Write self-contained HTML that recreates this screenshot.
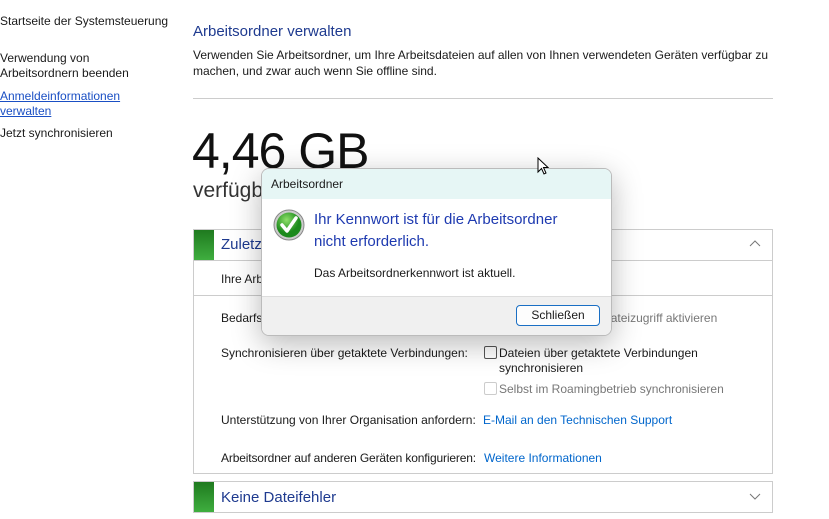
<!DOCTYPE html>
<html><head><meta charset="utf-8"><style>
body{margin:0;width:829px;height:519px;background:#fff;font-family:"Liberation Sans",sans-serif;font-size:12px;color:#1a1a1a;position:relative;overflow:hidden}
.a{position:absolute;white-space:nowrap}
.lnk{color:#0066cc}
.blue{color:#1d3d9c}
.cb{position:absolute;width:11px;height:11px;border:1px solid #555;border-radius:2px;background:#fff}
</style></head><body>
<div class="a" style="left:0;top:14px">Startseite der Systemsteuerung</div>
<div class="a" style="left:0;top:51px;line-height:15px">Verwendung von<br>Arbeitsordnern beenden</div>
<div class="a lnk" style="left:0;top:89px;line-height:15px;text-decoration:underline;color:#1a4fc4">Anmeldeinformationen<br>verwalten</div>
<div class="a" style="left:0;top:126px">Jetzt synchronisieren</div>

<div class="a blue" style="left:193px;top:23px;font-size:15px;color:#1e3a8f">Arbeitsordner verwalten</div>
<div class="a" style="left:193px;top:47px;line-height:16px">Verwenden Sie Arbeitsordner, um Ihre Arbeitsdateien auf allen von Ihnen verwendeten Geräten verfügbar zu<br>machen, und zwar auch wenn Sie offline sind.</div>
<div class="a" style="left:193px;top:98px;width:580px;height:1px;background:#ccc"></div>
<div class="a" style="left:192px;top:122px;font-size:50px;line-height:58px;color:#111;letter-spacing:-1px">4,46 GB</div>
<div class="a" style="left:193px;top:179px;font-size:21px;color:#333">verfügbar</div>

<div class="a" style="left:193px;top:229px;width:578px;height:243px;border:1px solid #ccc"></div>
<div class="a" style="left:194px;top:230px;width:20px;height:30px;background:linear-gradient(#1f7a1f,#3fae3f)"></div>
<div class="a" style="left:221px;top:236px;font-size:15px;color:#1e3a8f">Zuletzt synchronisiert</div>
<svg class="a" style="left:749px;top:239px" width="12" height="8"><path d="M1 7L6 2L11 7" fill="none" stroke="#777" stroke-width="1"/></svg>
<div class="a" style="left:194px;top:260px;width:578px;height:1px;background:#ccc"></div>
<div class="a" style="left:221px;top:272px">Ihre Arbeitsordner</div>
<div class="a" style="left:194px;top:295px;width:578px;height:1px;background:#ccc"></div>
<div class="a" style="left:221px;top:311px">Bedarfsgesteuerter Dateizugriff:</div>
<div class="a" style="left:494px;top:311px;color:#777">Bedarfsgesteuerten Dateizugriff aktivieren</div>
<div class="a" style="left:221px;top:346px">Synchronisieren über getaktete Verbindungen:</div>
<div class="cb" style="left:484px;top:346px"></div>
<div class="a" style="left:499px;top:346px;line-height:15px">Dateien über getaktete Verbindungen<br>synchronisieren</div>
<div class="cb" style="left:484px;top:382px;border-color:#ccc"></div>
<div class="a" style="left:499px;top:382px;color:#777">Selbst im Roamingbetrieb synchronisieren</div>
<div class="a" style="left:221px;top:413px">Unterstützung von Ihrer Organisation anfordern:</div>
<div class="a lnk" style="left:483px;top:413px">E-Mail an den Technischen Support</div>
<div class="a" style="left:221px;top:451px;letter-spacing:-0.15px">Arbeitsordner auf anderen Geräten konfigurieren:</div>
<div class="a lnk" style="left:484px;top:451px">Weitere Informationen</div>

<div class="a" style="left:193px;top:481px;width:578px;height:30px;border:1px solid #ccc"></div>
<div class="a" style="left:194px;top:482px;width:20px;height:30px;background:linear-gradient(#1f7a1f,#3fae3f)"></div>
<div class="a" style="left:221px;top:489px;font-size:15px;color:#1e3a8f">Keine Dateifehler</div>
<svg class="a" style="left:749px;top:493px" width="12" height="8"><path d="M1 1L6 6L11 1" fill="none" stroke="#777" stroke-width="1"/></svg>

<div class="a" style="left:261px;top:168px;width:349px;height:166px;border:1px solid #bbb;border-radius:8px;overflow:hidden;background:#fff;box-shadow:0 8px 30px rgba(0,0,0,.28)">
 <div style="height:30px;background:#e6f6f5;padding-left:9px;line-height:30px;font-size:12px">Arbeitsordner</div>
 <svg style="position:absolute;left:11px;top:40px" width="32" height="32"><defs><radialGradient id="g" cx="40%" cy="30%"><stop offset="0" stop-color="#8ee06a"/><stop offset="1" stop-color="#1c8a1c"/></radialGradient></defs><circle cx="16" cy="16" r="15" fill="#ccc" stroke="#888"/><circle cx="16" cy="16" r="12.5" fill="url(#g)"/><path d="M9 16l5 6 9-13" fill="none" stroke="#fff" stroke-width="3.5" stroke-linecap="round" stroke-linejoin="round"/></svg>
 <div class="a" style="left:52px;top:40px;font-size:15px;line-height:22px;color:#1e3ab0">Ihr Kennwort ist für die Arbeitsordner<br>nicht erforderlich.</div>
 <div class="a" style="left:52px;top:97px">Das Arbeitsordnerkennwort ist aktuell.</div>
 <div style="position:absolute;left:0;top:127px;width:100%;height:40px;background:#f0f0f0;border-top:1px solid #ddd"></div>
 <div class="a" style="left:254px;top:136px;width:82px;height:19px;border:1px solid #1a6fc4;border-radius:4px;background:#fdfdfd;text-align:center;line-height:19px">Schließen</div>
</div>
<svg class="a" style="left:537px;top:157px" width="14" height="20"><path d="M1 1V15L4.5 11.5L7 17L9 16L6.5 10.5H11Z" fill="#fff" stroke="#000" stroke-width="1"/></svg>
</body></html>
